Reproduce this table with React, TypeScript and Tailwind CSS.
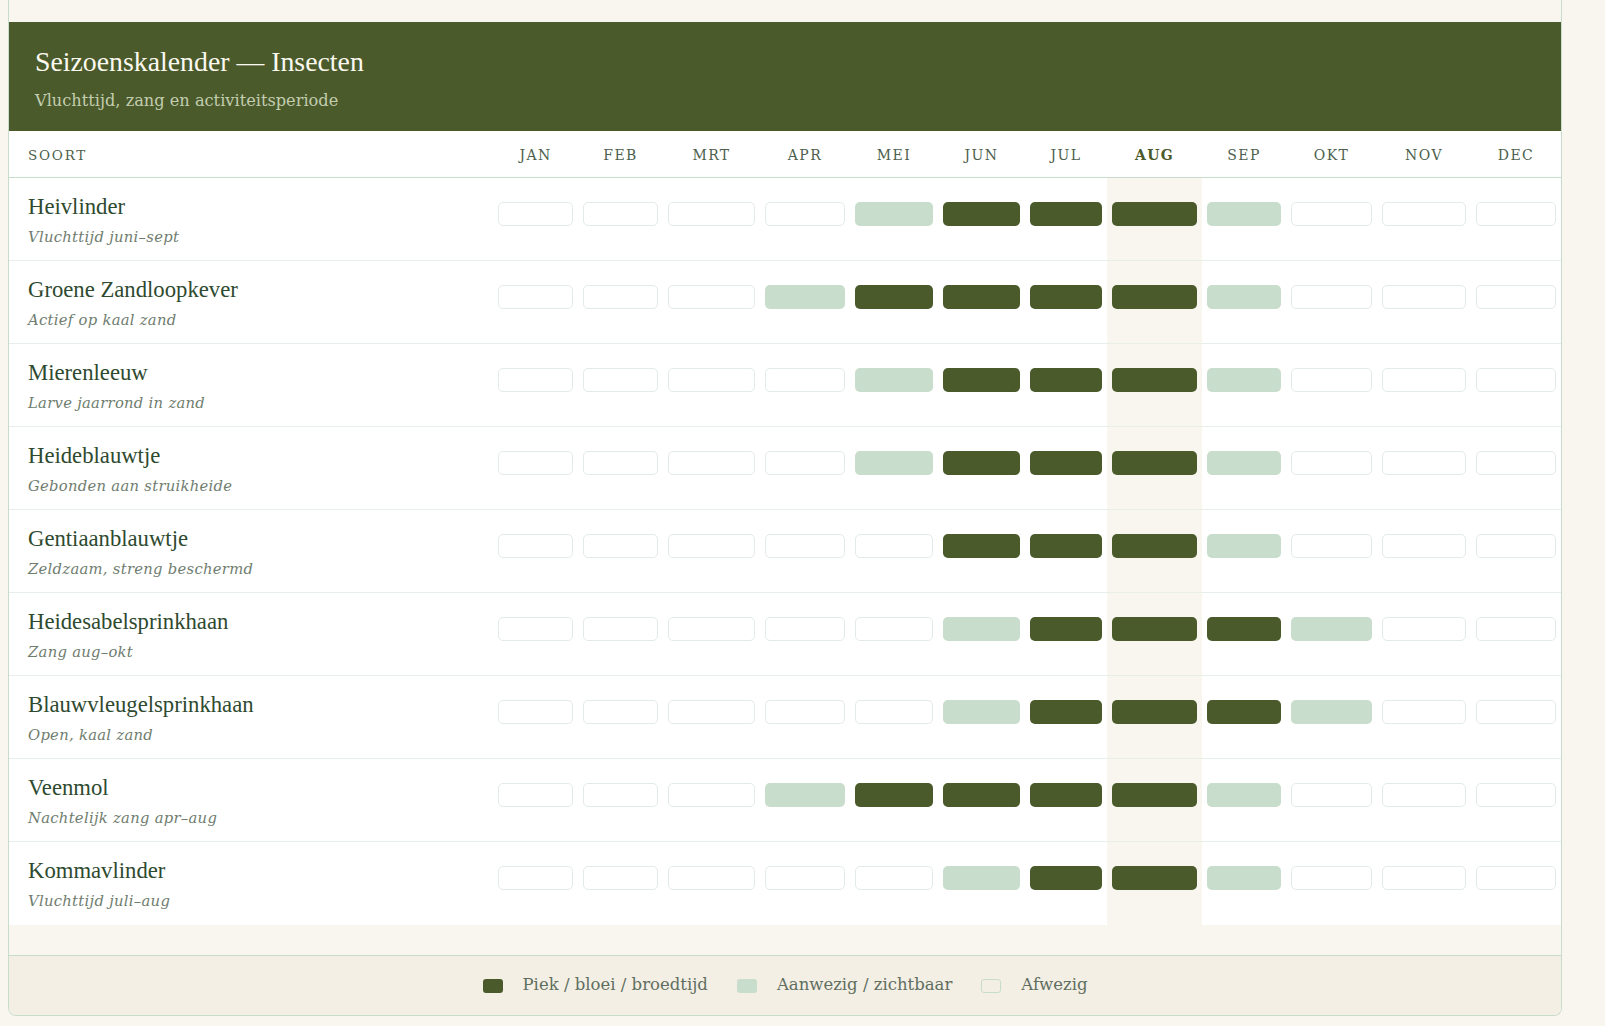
const months = ["JAN", "FEB", "MRT", "APR", "MEI", "JUN", "JUL", "AUG", "SEP", "OKT", "NOV", "DEC"];

// 0 = afwezig, 1 = aanwezig, 2 = piek
const species = [
  { name: "Heivlinder", note: "Vluchttijd juni–sept", months: [0, 0, 0, 0, 1, 2, 2, 2, 1, 0, 0, 0] },
  { name: "Groene Zandloopkever", note: "Actief op kaal zand", months: [0, 0, 0, 1, 2, 2, 2, 2, 1, 0, 0, 0] },
  { name: "Mierenleeuw", note: "Larve jaarrond in zand", months: [0, 0, 0, 0, 1, 2, 2, 2, 1, 0, 0, 0] },
  { name: "Heideblauwtje", note: "Gebonden aan struikheide", months: [0, 0, 0, 0, 1, 2, 2, 2, 1, 0, 0, 0] },
  { name: "Gentiaanblauwtje", note: "Zeldzaam, streng beschermd", months: [0, 0, 0, 0, 0, 2, 2, 2, 1, 0, 0, 0] },
  { name: "Heidesabelsprinkhaan", note: "Zang aug–okt", months: [0, 0, 0, 0, 0, 1, 2, 2, 2, 1, 0, 0] },
  { name: "Blauwvleugelsprinkhaan", note: "Open, kaal zand", months: [0, 0, 0, 0, 0, 1, 2, 2, 2, 1, 0, 0] },
  { name: "Veenmol", note: "Nachtelijk zang apr–aug", months: [0, 0, 0, 1, 2, 2, 2, 2, 1, 0, 0, 0] },
  { name: "Kommavlinder", note: "Vluchttijd juli–aug", months: [0, 0, 0, 0, 0, 1, 2, 2, 1, 0, 0, 0] },
];

const CURRENT = 7; // AUG

const gridCols =
  "grid grid-cols-[484px_85px_85px_97px_90px_88px_87px_82px_95px_84px_91px_94px_90px]";

const heading = { fontFamily: '"Liberation Serif", "Times New Roman", serif' };
const body = { fontFamily: '"DejaVu Serif", "Liberation Serif", serif' };

function Bar({ level }: { level: number }) {
  if (level === 2) return <div className="h-6 rounded-[5px] bg-[#4a5a2b]" />;
  if (level === 1) return <div className="h-6 rounded-[5px] bg-[#c8ddcb]" />;
  return <div className="h-6 rounded-[5px] border border-[#e2ece4] bg-white" />;
}

export default function App() {
  return (
    <div className="w-[1605px] h-[1026px] overflow-hidden bg-[#f9f6f0] pl-2" style={body}>
      <div className="w-[1554px] pt-[22px] border-x border-b border-[#c8dccb] rounded-b-lg overflow-hidden">
        {/* Header */}
        <div className="h-[109px] bg-[#4a5a2b] pl-[26px] pt-[23px]">
          <h1 className="text-[27.8px] leading-[34px] text-[#fbf8f0]" style={heading}>
            Seizoenskalender — Insecten
          </h1>
          <p className="mt-[10px] text-[16.2px] leading-[24px] text-[#c3cdb0]">
            Vluchttijd, zang en activiteitsperiode
          </p>
        </div>

        {/* Column header */}
        <div className={`${gridCols} h-[47px] pt-[2px] items-center bg-white border-b border-[#c8dccb]`}>
          <div className="pl-[19px] text-[13.5px] tracking-[0.13em] text-[#4d5f4d]">SOORT</div>
          {months.map((m, i) => (
            <div
              key={m}
              className={
                i === CURRENT
                  ? "text-center text-[14px] tracking-[0.1em] font-bold text-[#4a5a2b]"
                  : "text-center text-[14px] tracking-[0.1em] text-[#4d5f4d]"
              }
            >
              {m}
            </div>
          ))}
        </div>

        {/* Rows */}
        <div className="bg-white">
          {species.map((s, r) => (
            <div
              key={s.name}
              className={
                r === species.length - 1
                  ? `${gridCols} h-[83px]`
                  : `${gridCols} h-[83px] border-b border-[#e8efe9]`
              }
            >
              <div className="pl-[19px] pt-[15px]">
                <div className="text-[22.7px] leading-[28px] text-[#2e4a2f]" style={heading}>
                  {s.name}
                </div>
                <div className="mt-[6px] text-[14.75px] leading-[20px] italic tracking-[0.02em] text-[#6f7d6f]">
                  {s.note}
                </div>
              </div>
              {s.months.map((lvl, i) => (
                <div
                  key={i}
                  className={i === CURRENT ? "px-[5px] pt-[24px] bg-[#f9f6ef]" : "px-[5px] pt-[24px]"}
                >
                  <Bar level={lvl} />
                </div>
              ))}
            </div>
          ))}
        </div>

        <div className="h-[30px]" />

        {/* Legend */}
        <div className="h-[60px] border-t border-[#c8dccb] bg-[#f3efe5] flex items-center justify-center text-[16.5px] text-[#5f6e5f]">
          <div className="flex items-center gap-5">
            <span className="w-5 h-[14px] rounded-[3px] bg-[#4a5a2b]" />
            <span>Piek / bloei / broedtijd</span>
          </div>
          <div className="flex items-center gap-5 ml-[29px]">
            <span className="w-5 h-[14px] rounded-[3px] bg-[#c8ddcb]" />
            <span>Aanwezig / zichtbaar</span>
          </div>
          <div className="flex items-center gap-5 ml-[29px]">
            <span className="w-5 h-[14px] rounded-[3px] border border-[#c8dccb] bg-[#f3efe5]" />
            <span>Afwezig</span>
          </div>
        </div>
      </div>
    </div>
  );
}
